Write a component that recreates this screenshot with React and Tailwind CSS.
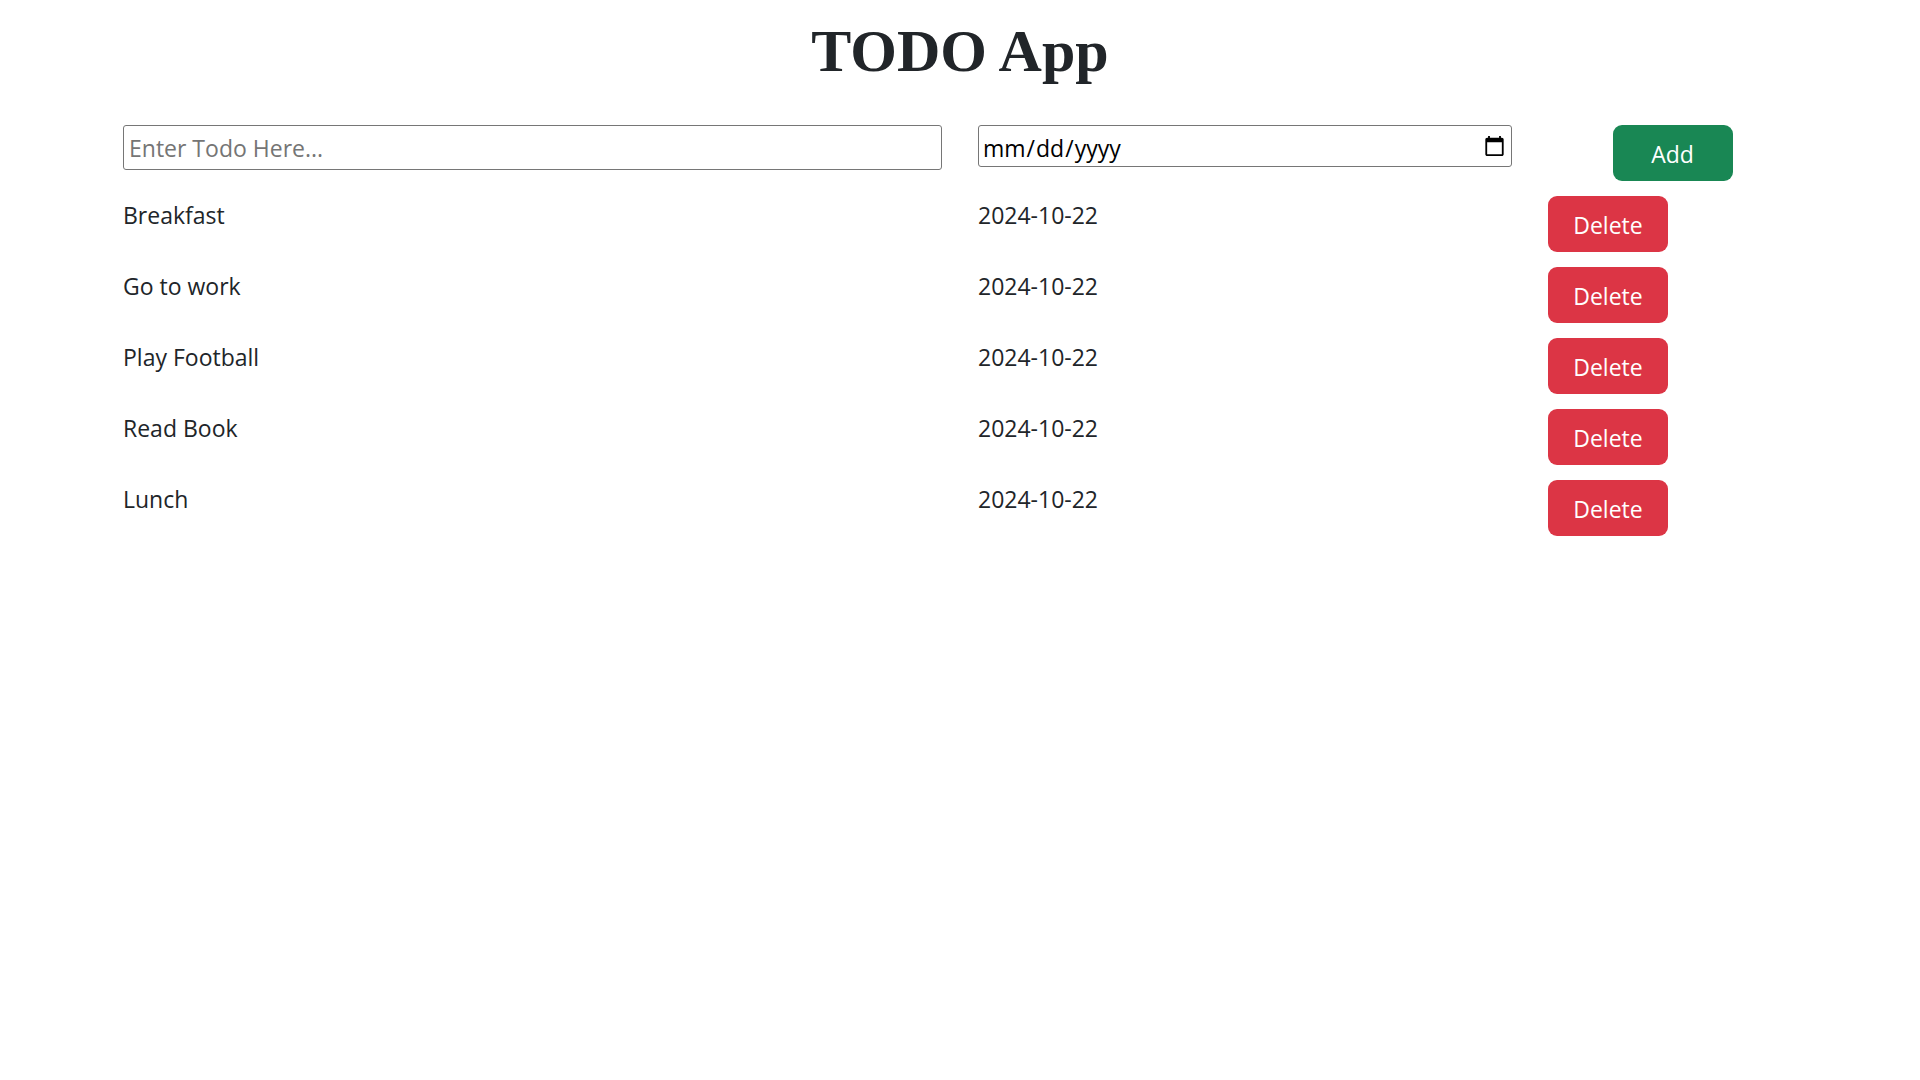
import { useState } from "react";

const initialTodos = [
  { id: 1, name: "Breakfast", date: "2024-10-22" },
  { id: 2, name: "Go to work", date: "2024-10-22" },
  { id: 3, name: "Play Football", date: "2024-10-22" },
  { id: 4, name: "Read Book", date: "2024-10-22" },
  { id: 5, name: "Lunch", date: "2024-10-22" },
];

const buttonClass = "h-14 w-[120px] rounded-[9px] pt-0.5 text-white";

function AddTodo({ onAdd }) {
  const [name, setName] = useState("");
  const [date, setDate] = useState("");

  const submit = (event) => {
    event.preventDefault();
    if (!name || !date) return;
    onAdd({ id: Date.now(), name, date });
    setName("");
    setDate("");
  };

  return (
    <form onSubmit={submit} className="grid grid-cols-12 items-start gap-x-9">
      <input
        type="text"
        aria-label="Todo"
        placeholder="Enter Todo Here..."
        value={name}
        onChange={(event) => setName(event.target.value)}
        className="col-span-6 h-[45px] rounded-[3px] border border-[#767676] bg-white px-[5px] text-black placeholder:text-[#757575]"
      />
      <input
        type="date"
        aria-label="Due date"
        value={date}
        onChange={(event) => setDate(event.target.value)}
        className="col-span-4 h-[42px] rounded-[3px] border border-[#767676] bg-white px-[3px] text-black [&::-webkit-datetime-edit]:pt-1"
      />
      <div className="col-span-2 flex justify-center">
        <button type="submit" className={`${buttonClass} bg-[#198754]`}>
          Add
        </button>
      </div>
    </form>
  );
}

function TodoItem({ todo, onDelete }) {
  return (
    <li className="grid grid-cols-12 items-start gap-x-9">
      <div className="col-span-6 pt-px">{todo.name}</div>
      <div className="col-span-4 pt-px">{todo.date}</div>
      <div className="col-span-2">
        <button
          type="button"
          onClick={() => onDelete(todo.id)}
          className={`${buttonClass} bg-[#dc3545]`}
        >
          Delete
        </button>
      </div>
    </li>
  );
}

export default function App() {
  const [todos, setTodos] = useState(initialTodos);

  return (
    <main className="min-h-screen bg-white font-['Open_Sans',sans-serif] text-[23px] leading-9 text-[#212529]">
      <h1 className="pt-[15px] text-center font-['Liberation_Serif',serif] text-[60px] leading-[72px] font-bold">
        TODO App
      </h1>
      <div className="mx-auto mt-[38px] flex w-full max-w-[1710px] flex-col gap-[15px] px-[18px]">
        <AddTodo onAdd={(todo) => setTodos([...todos, todo])} />
        <ul className="flex flex-col gap-[15px]">
          {todos.map((todo) => (
            <TodoItem
              key={todo.id}
              todo={todo}
              onDelete={(id) => setTodos(todos.filter((item) => item.id !== id))}
            />
          ))}
        </ul>
      </div>
    </main>
  );
}
